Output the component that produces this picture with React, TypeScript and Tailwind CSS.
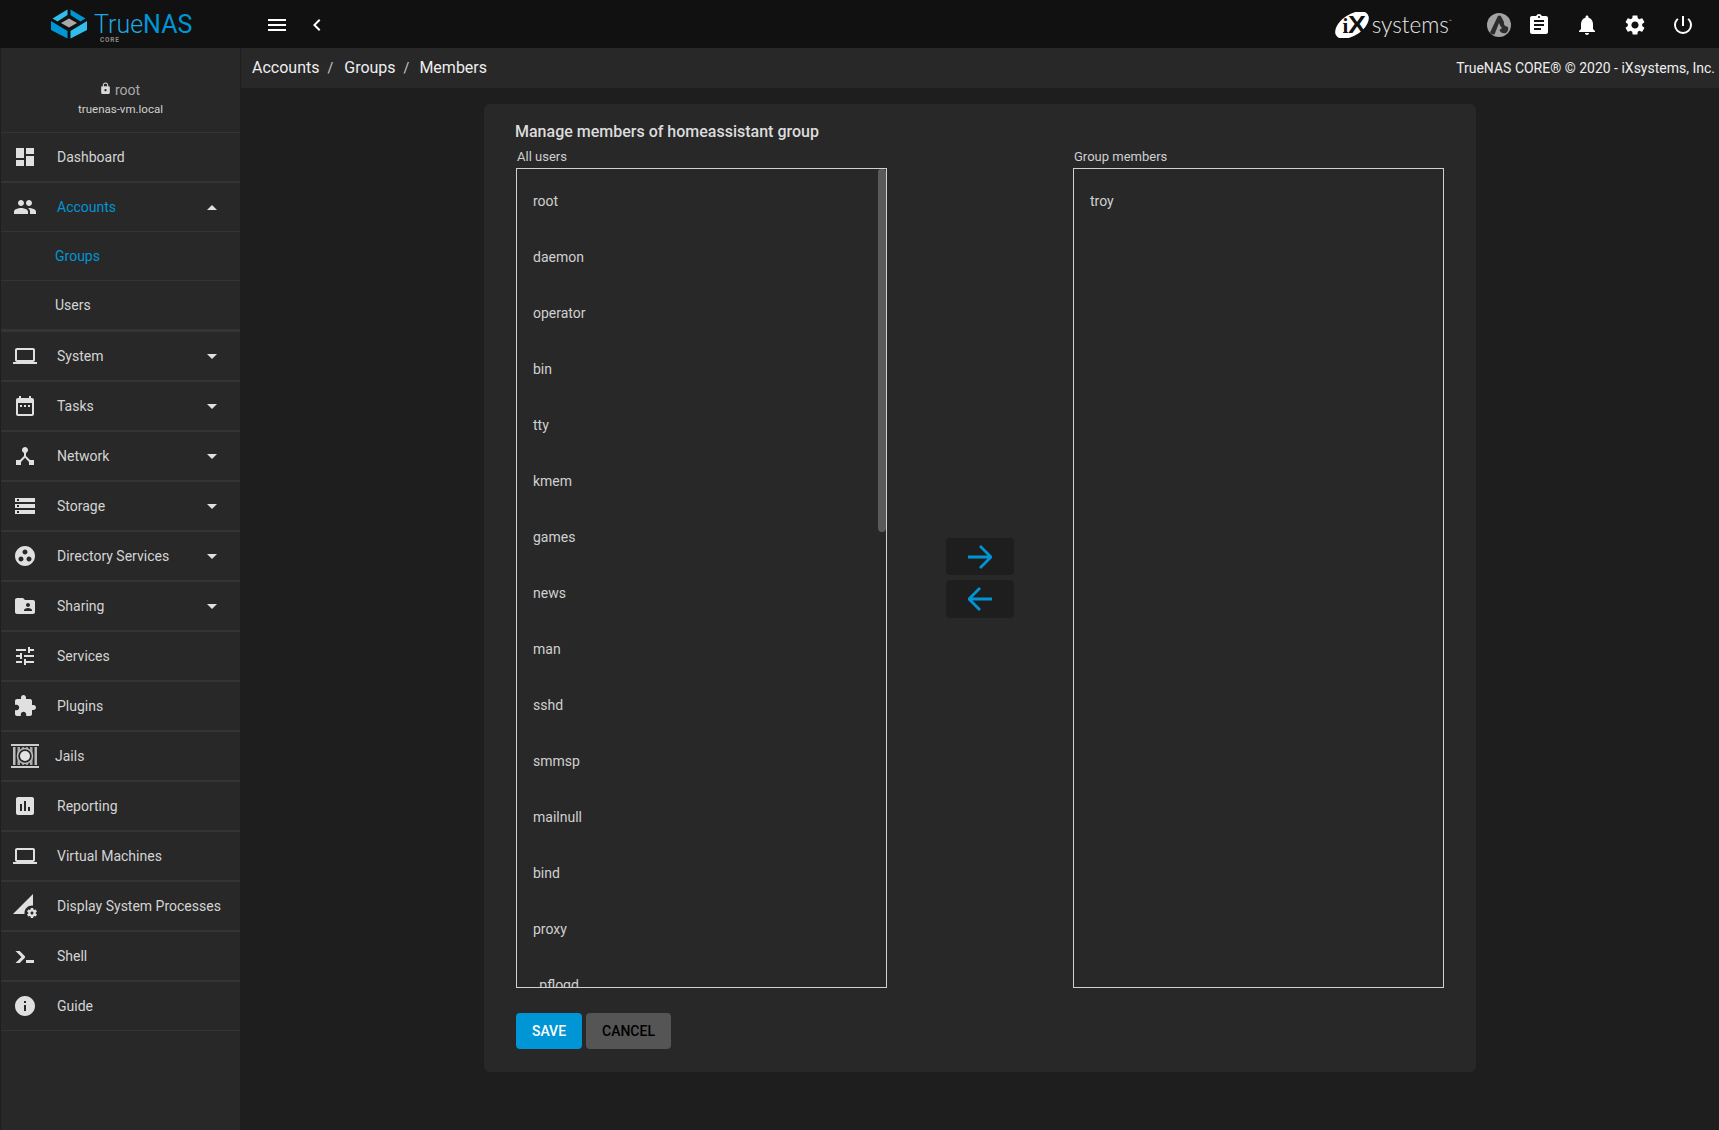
import React from "react";

const P = {
  dashboard: "M3 13h8V3H3v10zm0 8h8v-6H3v6zm10 0h8V11h-8v10zm0-18v6h8V3h-8z",
  group: "M16 11c1.66 0 2.99-1.34 2.99-3S17.66 5 16 5c-1.66 0-3 1.34-3 3s1.34 3 3 3zm-8 0c1.66 0 2.99-1.34 2.99-3S9.66 5 8 5C6.34 5 5 6.34 5 8s1.34 3 3 3zm0 2c-2.33 0-7 1.17-7 3.5V19h14v-2.5c0-2.33-4.67-3.5-7-3.5zm8 0c-.29 0-.62.02-.97.05 1.16.84 1.97 1.97 1.97 3.45V19h6v-2.5c0-2.33-4.67-3.5-7-3.5z",
  laptop: "M20 18c1.1 0 1.99-.9 1.99-2L22 6c0-1.1-.9-2-2-2H4c-1.1 0-2 .9-2 2v10c0 1.1.9 2 2 2H0v2h24v-2h-4zM4 6h16v10H4V6z",
  calendar: "M9 11H7v2h2v-2zm4 0h-2v2h2v-2zm4 0h-2v2h2v-2zm2-7h-1V2h-2v2H8V2H6v2H5c-1.11 0-1.99.9-1.99 2L3 20c0 1.1.89 2 2 2h14c1.1 0 2-.9 2-2V6c0-1.1-.9-2-2-2zm0 16H5V9h14v11z",
  hub: "M17 16l-4-4V8.82C14.16 8.4 15 7.3 15 6c0-1.66-1.34-3-3-3S9 4.34 9 6c0 1.3.84 2.4 2 2.82V12l-4 4H3v5h5v-3.05l4-4.2 4 4.2V21h5v-5h-4z",
  storage: "M2 20h20v-4H2v4zm2-3h2v2H4v-2zM2 4v4h20V4H2zm4 3H4V5h2v2zm-4 7h20v-4H2v4zm2-3h2v2H4v-2z",
  work: "M12 2C6.48 2 2 6.48 2 12s4.48 10 10 10 10-4.48 10-10S17.52 2 12 2zM8 17.5c-1.38 0-2.5-1.12-2.5-2.5s1.12-2.5 2.5-2.5 2.5 1.12 2.5 2.5-1.12 2.5-2.5 2.5zM9.5 8c0-1.38 1.12-2.5 2.5-2.5s2.5 1.12 2.5 2.5-1.12 2.5-2.5 2.5S9.5 9.38 9.5 8zm6.5 9.5c-1.38 0-2.5-1.12-2.5-2.5s1.12-2.5 2.5-2.5 2.5 1.12 2.5 2.5-1.12 2.5-2.5 2.5z",
  folder: "M20 6h-8l-2-2H4c-1.1 0-1.99.9-1.99 2L2 18c0 1.1.9 2 2 2h16c1.1 0 2-.9 2-2V8c0-1.1-.9-2-2-2zm-5 3c1.1 0 2 .9 2 2s-.9 2-2 2-2-.9-2-2 .9-2 2-2zm4 8h-8v-1c0-1.33 2.67-2 4-2s4 .67 4 2v1z",
  tune: "M3 17v2h6v-2H3zM3 5v2h10V5H3zm10 16v-2h8v-2h-8v-2h-2v6h2zM7 9v2H3v2h4v2h2V9H7zm14 4v-2H11v2h10zm-6-4h2V7h4V5h-4V3h-2v6z",
  extension: "M20.5 11H19V7c0-1.1-.9-2-2-2h-4V3.5C13 2.12 11.88 1 10.5 1S8 2.12 8 3.5V5H4c-1.1 0-1.99.9-1.99 2v3.8H3.5c1.49 0 2.7 1.21 2.7 2.7s-1.21 2.7-2.7 2.7H2V20c0 1.1.9 2 2 2h3.8v-1.5c0-1.49 1.21-2.7 2.7-2.7 1.49 0 2.7 1.21 2.7 2.7V22H17c1.1 0 2-.9 2-2v-4h1.5c1.38 0 2.5-1.12 2.5-2.5S21.88 11 20.5 11z",
  assessment: "M19 3H5c-1.1 0-2 .9-2 2v14c0 1.1.9 2 2 2h14c1.1 0 2-.9 2-2V5c0-1.1-.9-2-2-2zM9 17H7v-7h2v7zm4 0h-2V7h2v10zm4 0h-2v-4h2v4z",
  perm: "M18.99 11.5c.34 0 .67.03 1 .07L20 0 0 20h11.56c-.04-.33-.07-.66-.07-1 0-4.14 3.36-7.5 7.5-7.5zm3.71 7.99c.02-.16.04-.32.04-.49 0-.17-.01-.33-.04-.49l1.06-.83c.09-.08.12-.21.06-.32l-1-1.73c-.06-.11-.19-.15-.31-.11l-1.24.5c-.26-.2-.54-.37-.85-.49l-.19-1.32c-.01-.12-.12-.21-.24-.21h-2c-.12 0-.23.09-.25.21l-.19 1.32c-.3.13-.59.29-.85.49l-1.24-.5c-.11-.04-.24 0-.31.11l-1 1.73c-.06.11-.04.24.06.32l1.06.83c-.02.16-.03.32-.03.49 0 .17.01.33.03.49l-1.06.83c-.09.08-.12.21-.06.32l1 1.73c.06.11.19.15.31.11l1.24-.5c.26.2.54.37.85.49l.19 1.32c.02.12.12.21.25.21h2c.12 0 .23-.09.25-.21l.19-1.32c.3-.13.59-.29.84-.49l1.25.5c.11.04.24 0 .31-.11l1-1.73c.06-.11.03-.24-.06-.32l-1.07-.83zm-3.71 1.01c-.83 0-1.5-.67-1.5-1.5s.67-1.5 1.5-1.5 1.5.67 1.5 1.5-.67 1.5-1.5 1.5z",
  console: "M13,19V16H21V19H13M8.5,13L2.47,7H6.71L11.67,11.95C12.25,12.54 12.25,13.5 11.67,14.07L6.74,19H2.5L8.5,13Z",
  info: "M12 2C6.48 2 2 6.48 2 12s4.48 10 10 10 10-4.48 10-10S17.52 2 12 2zm1 15h-2v-6h2v6zm0-8h-2V7h2v2z",
  lock: "M18 8h-1V6c0-2.76-2.24-5-5-5S7 3.24 7 6v2H6c-1.1 0-2 .9-2 2v10c0 1.1.9 2 2 2h12c1.1 0 2-.9 2-2V10c0-1.1-.9-2-2-2zm-6 9c-1.1 0-2-.9-2-2s.9-2 2-2 2 .9 2 2-.9 2-2 2zm3.1-9H8.9V6c0-1.71 1.39-3.1 3.1-3.1 1.71 0 3.1 1.39 3.1 3.1v2z",
  menu: "M3 18h18v-2H3v2zm0-5h18v-2H3v2zm0-7v2h18V6H3z",
  chevron: "M15.41 7.41L14 6l-6 6 6 6 1.41-1.41L10.83 12z",
  assignment: "M19 3h-4.18C14.4 1.84 13.3 1 12 1c-1.3 0-2.4.84-2.82 2H5c-1.1 0-2 .9-2 2v14c0 1.1.9 2 2 2h14c1.1 0 2-.9 2-2V5c0-1.1-.9-2-2-2zm-7 0c.55 0 1 .45 1 1s-.45 1-1 1-1-.45-1-1 .45-1 1-1zm2 14H7v-2h7v2zm3-4H7v-2h10v2zm0-4H7V7h10v2z",
  bell: "M12 22c1.1 0 2-.9 2-2h-4c0 1.1.89 2 2 2zm6-6v-5c0-3.07-1.64-5.64-4.5-6.32V4c0-.83-.67-1.5-1.5-1.5s-1.5.67-1.5 1.5v.68C7.63 5.36 6 7.92 6 11v5l-2 2v1h16v-1l-2-2z",
  gear: "M19.14,12.94c0.04-0.3,0.06-0.61,0.06-0.94c0-0.32-0.02-0.64-0.07-0.94l2.03-1.58c0.18-0.14,0.23-0.41,0.12-0.61 l-1.92-3.32c-0.12-0.22-0.37-0.29-0.59-0.22l-2.39,0.96c-0.5-0.38-1.03-0.7-1.62-0.94L14.4,2.81c-0.04-0.24-0.24-0.41-0.48-0.41 h-3.84c-0.24,0-0.43,0.17-0.47,0.41L9.25,5.35C8.66,5.59,8.12,5.92,7.63,6.29L5.24,5.33c-0.22-0.08-0.47,0-0.59,0.22L2.74,8.87 C2.62,9.08,2.66,9.34,2.86,9.48l2.03,1.58C4.84,11.36,4.8,11.69,4.8,12s0.02,0.64,0.07,0.94l-2.03,1.58 c-0.18,0.14-0.23,0.41-0.12,0.61l1.92,3.32c0.12,0.22,0.37,0.29,0.59,0.22l2.39-0.96c0.5,0.38,1.03,0.7,1.62,0.94l0.36,2.54 c0.05,0.24,0.24,0.41,0.48,0.41h3.84c0.24,0,0.44-0.17,0.47-0.41l0.36-2.54c0.59-0.24,1.13-0.56,1.62-0.94l2.39,0.96 c0.22,0.08,0.47,0,0.59-0.22l1.92-3.32c0.12-0.22,0.07-0.47-0.12-0.61L19.14,12.94z M12,15.6c-1.98,0-3.6-1.62-3.6-3.6 s1.62-3.6,3.6-3.6s3.6,1.62,3.6,3.6S13.98,15.6,12,15.6z",
  power: "M13,3H11V13H13V3M17.83,5.17L16.41,6.59C18.05,7.91 19,9.9 19,12A7,7 0 0,1 12,19C8.13,19 5,15.87 5,12C5,9.9 5.95,7.91 7.58,6.58L6.17,5.17C4.23,6.82 3,9.26 3,12A9,9 0 0,0 12,21A9,9 0 0,0 21,12C21,9.26 19.77,6.82 17.83,5.17Z",
  down: "M7 10l5 5 5-5z",
  up: "M7 15l5-5 5 5z",
};

function Icon({ d, className = "" }: { d: string; className?: string }) {
  return (
    <svg viewBox="0 0 24 24" width="24" height="24" fill="currentColor" className={`shrink-0 ${className}`}>
      <path d={d} />
    </svg>
  );
}

function JailIcon() {
  return (
    <svg viewBox="0 0 28 24" width="28" height="24" className="shrink-0">
      <rect x="0" y="0" width="28" height="2" fill="#ccc" />
      <rect x="0" y="22" width="28" height="2" fill="#ccc" />
      <rect x="2" y="3" width="2.5" height="18" fill="#bbb" />
      <rect x="6.5" y="3" width="2.5" height="18" fill="#aaa" />
      <rect x="11" y="3" width="2" height="18" fill="#999" />
      <rect x="15" y="3" width="2" height="18" fill="#999" />
      <rect x="19" y="3" width="2.5" height="18" fill="#aaa" />
      <rect x="23.5" y="3" width="2.5" height="18" fill="#bbb" />
      <circle cx="14" cy="12" r="7.5" fill="#282828" stroke="#bbb" strokeWidth="1.5" />
      <circle cx="14" cy="12" r="5" fill="#e4e4e4" />
    </svg>
  );
}

function LogoMark() {
  return (
    <svg viewBox="51 9 37 30" width="37" height="30" className="shrink-0">
      <polygon points="67.5,9.5 67.5,15 57.5,21.5 52.5,18.5" fill="#31beec" />
      <polygon points="70.5,9.5 70.5,15 80.5,21.5 85.5,18.5" fill="#0095d5" />
      <polygon points="51,21 51,30 67.5,38.5 67.5,31" fill="#0095d5" />
      <polygon points="87,21 87,30 70.5,38.5 70.5,31" fill="#31beec" />
      <polygon points="69,18.5 77,23 69,27.5 61,23" fill="#aaaaaa" />
    </svg>
  );
}

function IxMark() {
  return (
    <svg viewBox="0 0 37 26" width="37" height="26" className="shrink-0">
      <ellipse cx="18" cy="13" rx="19" ry="10.5" transform="rotate(-34 18 13)" fill="#fff" />
      <text x="8.5" y="21" fontFamily="Liberation Serif" fontSize="21" fontWeight="700" fill="#111">i</text>
      <text x="14" y="21" fontFamily="Liberation Sans" fontSize="24" fontWeight="700" fill="#111" textLength="18" lengthAdjust="spacingAndGlyphs">X</text>
    </svg>
  );
}

function CommunityIcon() {
  return (
    <svg viewBox="0 0 24 24" width="24" height="24" className="shrink-0">
      <circle cx="12" cy="12" r="12" fill="#a3a3a3" />
      <path d="M3 19.5 L10.8 3.2 Q12.4 1.6 14 3.2 L17 9 Q16 13 21 14 Q22 17.5 19 20 Q14 21 12.5 17 L15 15 Q13 13 12 10 L7.5 21.5 Q4.5 22 3 19.5Z" fill="#2c2c2c" />
    </svg>
  );
}

type Item = { label: string; d?: string; jail?: boolean; chev?: "up" | "down"; active?: boolean; sub?: boolean; border: string };

const items: Item[] = [
  { label: "Dashboard", d: P.dashboard, border: "border-b-2" },
  { label: "Accounts", d: P.group, chev: "up", active: true, border: "border-b" },
  { label: "Groups", sub: true, active: true, border: "border-b" },
  { label: "Users", sub: true, border: "border-b-[3px]" },
  { label: "System", d: P.laptop, chev: "down", border: "border-b-2" },
  { label: "Tasks", d: P.calendar, chev: "down", border: "border-b-2" },
  { label: "Network", d: P.hub, chev: "down", border: "border-b-2" },
  { label: "Storage", d: P.storage, chev: "down", border: "border-b-2" },
  { label: "Directory Services", d: P.work, chev: "down", border: "border-b-2" },
  { label: "Sharing", d: P.folder, chev: "down", border: "border-b-2" },
  { label: "Services", d: P.tune, border: "border-b-2" },
  { label: "Plugins", d: P.extension, border: "border-b-2" },
  { label: "Jails", jail: true, border: "border-b-2" },
  { label: "Reporting", d: P.assessment, border: "border-b-2" },
  { label: "Virtual Machines", d: P.laptop, border: "border-b-2" },
  { label: "Display System Processes", d: P.perm, border: "border-b-2" },
  { label: "Shell", d: P.console, border: "border-b-2" },
  { label: "Guide", d: P.info, border: "border-b" },
];

function NavRow({ item }: { item: Item }) {
  const color = item.active ? "text-[#0095d5]" : "text-[#d4d4d4]";
  return (
    <div className={`box-content flex h-12 items-center border-[#343434] ${item.border} text-sm ${color}`}>
      {item.sub ? (
        <span className="pl-[54px]">{item.label}</span>
      ) : item.jail ? (
        <>
          <span className="ml-[10px] text-[#e0e0e0]"><JailIcon /></span>
          <span className="ml-[16px]">{item.label}</span>
        </>
      ) : (
        <>
          <Icon d={item.d as string} className="ml-3 text-[#e0e0e0]" />
          <span className="ml-5">{item.label}</span>
        </>
      )}
      {item.chev && <Icon d={item.chev === "up" ? P.up : P.down} className="ml-auto mr-4 text-[#e0e0e0]" />}
    </div>
  );
}

const users = ["root", "daemon", "operator", "bin", "tty", "kmem", "games", "news", "man", "sshd", "smmsp", "mailnull", "bind", "proxy", "_pflogd"];

function ListBox({ label, names, scroll }: { label: string; names: string[]; scroll?: boolean }) {
  return (
    <div className="w-[371px] shrink-0">
      <div className="h-[17px] pl-px text-[13px] leading-[11px] text-[#cfcfcf]">{label}</div>
      <div className="relative h-[820px] overflow-hidden border border-[#d0d0d0] pt-1">
        {names.map((n) => (
          <div key={n} className="flex h-14 items-center pl-4 text-sm text-[#d0d0d0]">{n}</div>
        ))}
        {scroll && <div className="absolute right-0 top-0 h-[363px] w-2 rounded-t-[3px] rounded-b-[4px] bg-[#5a5a5a]" />}
      </div>
    </div>
  );
}

export default function App() {
  return (
    <div className="flex h-[1130px] w-[1719px] flex-col overflow-hidden bg-[#1e1e1e] font-['Roboto',sans-serif]">
      <header className="flex h-12 shrink-0 items-center bg-[#111111] text-white">
        <div className="flex w-[241px] shrink-0 items-center pl-[51px]">
          <LogoMark />
          <div className="relative ml-[6px] text-[25px] leading-none text-[#0095d5]">
            <span className="font-light text-[#1ea7e0]">True</span><span className="font-normal">NAS</span>
            <span className="absolute left-[6px] top-[25px] text-[6.5px] font-bold leading-none tracking-[0.8px] text-[#8a8a8a]">CORE</span>
          </div>
        </div>
        <Icon d={P.menu} className="ml-6 mt-[2px]" />
        <Icon d={P.chevron} className="ml-4 mt-[2px]" />
        <div className="ml-auto mt-[2px] flex items-center pr-3">
          <IxMark />
          <span className="ml-[1px] text-[22.5px] font-light leading-none text-[#e8e8e8] font-['Lato',sans-serif]">systems</span>
          <span className="mb-2 text-[5px] leading-none text-[#ccc]">™</span>
          <div className="ml-[35px]"><CommunityIcon /></div>
          <div className="ml-1 flex w-12 justify-center"><Icon d={P.assignment} /></div>
          <div className="flex w-12 justify-center"><Icon d={P.bell} /></div>
          <div className="flex w-12 justify-center"><Icon d={P.gear} /></div>
          <div className="flex w-12 justify-center"><Icon d={P.power} /></div>
        </div>
      </header>
      <div className="flex min-h-0 flex-1">
        <aside className="ml-px w-[239px] shrink-0 bg-[#282828]">
          <div className="flex h-[85px] flex-col items-center justify-center border-b border-[#343434] pt-[17px]">
            <div className="-ml-[2px] flex items-center text-sm leading-[20px] text-[#aaaaaa]">
              <Icon d={P.lock} className="mb-[3px] mr-[3px] !h-[13px] !w-[13px] text-[#d8d8d8]" />
              <span>root</span>
            </div>
            <div className="mt-[1px] text-[11.5px] leading-[16px] text-[#d0d0d0]">truenas-vm.local</div>
          </div>
          {items.map((it) => <NavRow key={it.label} item={it} />)}
        </aside>
        <main className="flex min-w-0 flex-1 flex-col border-l border-[#1e1e1e]">
          <div className="flex h-10 shrink-0 items-center justify-between bg-[#282828] pl-[11px] pr-[4px] text-[#eeeeee]">
            <div className="flex items-center text-base">
              <span>Accounts</span><span className="mx-[8px] text-sm text-[#ccc]">/</span>
              <span className="ml-[3px]">Groups</span><span className="mx-[8px] text-sm text-[#ccc]">/</span>
              <span className="ml-[2px]">Members</span>
            </div>
            <div className="text-sm">TrueNAS CORE® © 2020 - iXsystems, Inc.</div>
          </div>
          <div className="flex justify-center pt-4">
            <section className="h-[968px] w-[992px] rounded-md bg-[#282828] px-8 pt-4">
              <h1 className="-ml-px h-[31px] text-base font-medium leading-[24px] text-[#dcdcdc]">Manage members of homeassistant group</h1>
              <div className="flex">
                <ListBox label="All users" names={users} scroll />
                <div className="flex flex-1 flex-col items-center justify-center gap-[5px] pt-[17px]">
                  <button className="flex h-[37px] w-[68px] items-center justify-center rounded bg-[#1e1e1e] text-[#0095d5]">
                    <svg viewBox="0 0 24 24" width="24" height="24" fill="none" stroke="currentColor" strokeWidth="2.8"><path d="M0 12h23M12 1l11 11-11 11" /></svg>
                  </button>
                  <button className="flex h-[38px] w-[68px] items-center justify-center rounded bg-[#1e1e1e] text-[#0095d5]">
                    <svg viewBox="0 0 24 24" width="24" height="24" fill="none" stroke="currentColor" strokeWidth="2.8"><path d="M24 12H1M12 1L1 12l11 11" /></svg>
                  </button>
                </div>
                <ListBox label="Group members" names={["troy"]} />
              </div>
              <div className="mt-[25px] flex gap-1">
                <button className="h-9 w-[66px] rounded bg-[#0095d5] text-sm font-medium text-white">SAVE</button>
                <button className="h-9 w-[85px] rounded bg-[#555555] text-sm font-medium text-black">CANCEL</button>
              </div>
            </section>
          </div>
        </main>
      </div>
    </div>
  );
}
